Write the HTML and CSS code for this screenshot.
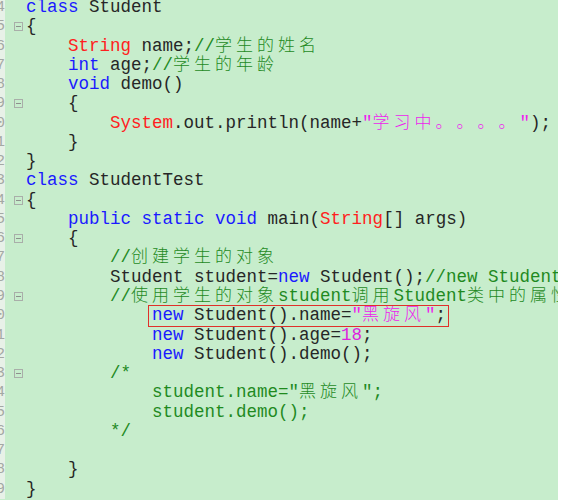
FILE: index.html
```html
<!DOCTYPE html>
<html>
<head>
<meta charset="utf-8">
<link rel="stylesheet" href="styles.css">
</head>
<body>
<div class="editor">
  <div class="lines">
    <div class="row"><span class="num"><span>4</span></span><span class="fold"></span><span class="code"><span class="k">class</span> Student</span></div>
    <div class="row"><span class="num"><span>5</span></span><span class="fold"><i class="mk"></i></span><span class="code">{</span></div>
    <div class="row"><span class="num"><span>6</span></span><span class="fold"></span><span class="code">    <span class="t">String</span> name;<span class="c">//<span class="zh">学生的姓名</span></span></span></div>
    <div class="row"><span class="num"><span>7</span></span><span class="fold"></span><span class="code">    <span class="k">int</span> age;<span class="c">//<span class="zh">学生的年龄</span></span></span></div>
    <div class="row"><span class="num"><span>8</span></span><span class="fold"></span><span class="code">    <span class="k">void</span> demo()</span></div>
    <div class="row"><span class="num"><span>9</span></span><span class="fold"><i class="mk"></i></span><span class="code">    {</span></div>
    <div class="row"><span class="num"><span>0</span></span><span class="fold"></span><span class="code">        <span class="t">System</span>.out.println(name+<span class="s">"<span class="zh">学习中。。。。</span>"</span>);</span></div>
    <div class="row"><span class="num"><span>1</span></span><span class="fold"></span><span class="code">    }</span></div>
    <div class="row"><span class="num"><span>2</span></span><span class="fold"></span><span class="code">}</span></div>
    <div class="row"><span class="num"><span>3</span></span><span class="fold"></span><span class="code"><span class="k">class</span> StudentTest</span></div>
    <div class="row"><span class="num"><span>4</span></span><span class="fold"><i class="mk"></i></span><span class="code">{</span></div>
    <div class="row"><span class="num"><span>5</span></span><span class="fold"></span><span class="code">    <span class="k">public</span> <span class="k">static</span> <span class="k">void</span> main(<span class="t">String</span>[] args)</span></div>
    <div class="row"><span class="num"><span>6</span></span><span class="fold"><i class="mk"></i></span><span class="code">    {</span></div>
    <div class="row"><span class="num"><span>7</span></span><span class="fold"></span><span class="code">        <span class="c">//<span class="zh">创建学生的对象</span></span></span></div>
    <div class="row"><span class="num"><span>8</span></span><span class="fold"></span><span class="code">        Student student=<span class="k">new</span> Student();<span class="c">//new Student();</span></span></div>
    <div class="row"><span class="num"><span>9</span></span><span class="fold"><i class="mk"></i></span><span class="code">        <span class="c">//<span class="zh">使用学生的对象</span>student<span class="zh">调用</span>Student<span class="zh">类中的属性和方法</span></span></span></div>
    <div class="row"><span class="num"><span>0</span></span><span class="fold"></span><span class="code">            <span class="box"><span class="k">new</span> Student().name=<span class="s">"<span class="zh">黑旋风</span>"</span>;</span></span></div>
    <div class="row"><span class="num"><span>1</span></span><span class="fold"></span><span class="code">            <span class="k">new</span> Student().age=<span class="n">18</span>;</span></div>
    <div class="row"><span class="num"><span>2</span></span><span class="fold"></span><span class="code">            <span class="k">new</span> Student().demo();</span></div>
    <div class="row"><span class="num"><span>3</span></span><span class="fold"><i class="mk"></i></span><span class="code">        <span class="c">/*</span></span></div>
    <div class="row"><span class="num"><span>4</span></span><span class="fold"></span><span class="code">            <span class="c">student.name="<span class="zh">黑旋风</span>";</span></span></div>
    <div class="row"><span class="num"><span>5</span></span><span class="fold"></span><span class="code">            <span class="c">student.demo();</span></span></div>
    <div class="row"><span class="num"><span>6</span></span><span class="fold"></span><span class="code">        <span class="c">*/</span></span></div>
    <div class="row"><span class="num"><span>7</span></span><span class="fold"></span><span class="code"></span></div>
    <div class="row"><span class="num"><span>8</span></span><span class="fold"></span><span class="code">    }</span></div>
    <div class="row"><span class="num"><span>9</span></span><span class="fold"></span><span class="code">}</span></div>
  </div>
</div>
</body>
</html>
```
FILE: styles.css
```css
html, body {
  margin: 0;
  padding: 0;
  background: #ffffff;
}

.editor {
  width: 558px;
  height: 500px;
  overflow: hidden;
  background: #c7edcc;
  position: relative;
}

.lines {
  margin-top: -2px;
  display: flex;
  flex-direction: column;
}

.row {
  display: flex;
  height: 19.28px;
  line-height: 19.28px;
  white-space: pre;
  overflow: visible;
}

.num {
  width: 5px;
  flex: none;
  overflow: hidden;
  background: #e8f1e8;
  color: #a4a8a4;
  font-family: "Liberation Mono", monospace;
  font-size: 15px;
}

.num > span {
  display: inline-block;
  margin-left: -4px;
}

.fold {
  width: 21px;
  flex: none;
  display: flex;
  align-items: center;
}

.mk {
  display: block;
  width: 7px;
  height: 7px;
  margin-left: 9px;
  border: 1px solid #a9aea9;
  position: relative;
}

.mk::after {
  content: "";
  position: absolute;
  left: 1px;
  right: 1px;
  top: 3px;
  height: 1px;
  background: #8c918c;
}

.code {
  font-family: "Liberation Mono", "Courier New", monospace;
  font-size: 17.5px;
  color: #262626;
}

.zh {
  font-family: "Noto Sans CJK SC", sans-serif;
  font-size: 17px;
  line-height: 0;
  letter-spacing: 4px;
  font-weight: 300;
  text-spacing-trim: space-all;
  font-feature-settings: "fwid" 1;
}

.k { color: #1a1aff; }
.t { color: #ff2020; }
.c { color: #1f8a1f; }
.s { color: #ee22ee; }
.n { color: #dd22dd; }

.box {
  display: inline-block;
  position: relative;
  height: 19.28px;
  vertical-align: top;
}

.box::before {
  content: "";
  position: absolute;
  left: -4px;
  right: -3px;
  top: -1px;
  bottom: -1px;
  border: 1px solid #e0302a;
}
```
